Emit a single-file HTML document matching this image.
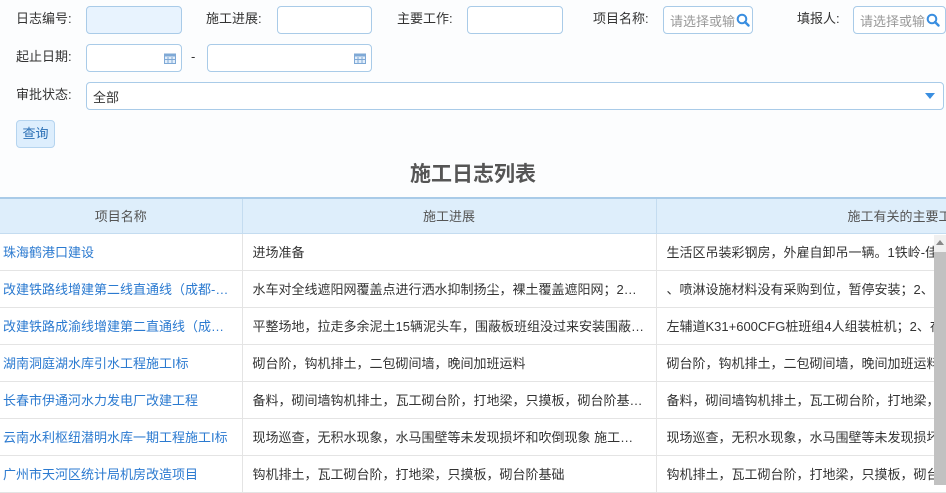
<!DOCTYPE html>
<html><head><meta charset="utf-8"><style>
*{margin:0;padding:0;box-sizing:border-box}
body{width:946px;height:485px;overflow:hidden;background:#fcfdfe;font-family:"Liberation Sans","Noto Sans CJK SC",sans-serif;font-size:13px;color:#333;position:relative}
.a{position:absolute}
.lbl{position:absolute;font-size:13px;color:#333;line-height:16px}
.inp{position:absolute;border:1px solid #a9cbe8;border-radius:4px;background:#fff;height:28px}
.ph{color:#999;font-size:13px;position:absolute;left:6px;top:4px;white-space:nowrap;overflow:hidden;width:66px}
table{position:absolute;left:0;top:197px;border-collapse:collapse;table-layout:fixed;width:1156px}
th{background:#deeefb;height:35px;font-weight:normal;color:#555;border-top:2px solid #a9cbe8;border-bottom:1px solid #c4dcf0;border-right:1px solid #c4dcf0;font-size:13px;padding:0}
td{height:37px;border-bottom:1px solid #e4e4e4;border-right:1px solid #e4e4e4;padding:0 10px;white-space:nowrap;overflow:hidden;text-overflow:ellipsis;background:#fff}
td.n{color:#2b7ad0;padding-left:3px}
</style></head><body>
<div class="lbl" style="left:16px;top:11px">日志编号:</div>
<div class="inp" style="left:86px;top:6px;width:96px;background:#e8f3fe"></div>
<div class="lbl" style="left:206px;top:11px">施工进展:</div>
<div class="inp" style="left:277px;top:6px;width:95px"></div>
<div class="lbl" style="left:397px;top:11px">主要工作:</div>
<div class="inp" style="left:467px;top:6px;width:96px"></div>
<div class="lbl" style="left:593px;top:11px">项目名称:</div>
<div class="inp" style="left:663px;top:6px;width:90px"><span class="ph">请选择或输</span>
<svg class="a" style="left:72px;top:6px" width="14" height="14" viewBox="0 0 14 14"><circle cx="6" cy="6" r="4.3" fill="none" stroke="#3a8ee0" stroke-width="2"/><path d="M9 9l3.5 3.5" stroke="#3a8ee0" stroke-width="2.4" stroke-linecap="round"/></svg></div>
<div class="lbl" style="left:797px;top:11px">填报人:</div>
<div class="inp" style="left:853px;top:6px;width:93px"><span class="ph">请选择或输</span>
<svg class="a" style="left:72px;top:6px" width="14" height="14" viewBox="0 0 14 14"><circle cx="6" cy="6" r="4.3" fill="none" stroke="#3a8ee0" stroke-width="2"/><path d="M9 9l3.5 3.5" stroke="#3a8ee0" stroke-width="2.4" stroke-linecap="round"/></svg></div>

<div class="lbl" style="left:16px;top:49px">起止日期:</div>
<div class="inp" style="left:86px;top:44px;width:96px">
<svg class="a" style="left:77px;top:7px" width="12" height="12" viewBox="0 0 12 12"><rect x="0.5" y="2" width="11" height="9.5" fill="#e3eefa" stroke="#7fa9d6"/><rect x="0.5" y="2" width="11" height="2.5" fill="#7fa9d6"/><path d="M4 5v6M8 5v6M1 7.5h10" stroke="#7fa9d6"/></svg></div>
<div class="lbl" style="left:191px;top:49px">-</div>
<div class="inp" style="left:207px;top:44px;width:165px">
<svg class="a" style="left:146px;top:7px" width="12" height="12" viewBox="0 0 12 12"><rect x="0.5" y="2" width="11" height="9.5" fill="#e3eefa" stroke="#7fa9d6"/><rect x="0.5" y="2" width="11" height="2.5" fill="#7fa9d6"/><path d="M4 5v6M8 5v6M1 7.5h10" stroke="#7fa9d6"/></svg></div>

<div class="lbl" style="left:16px;top:87px">审批状态:</div>
<div class="inp" style="left:86px;top:82px;width:858px"><span class="a" style="left:6px;top:4px;color:#333">全部</span>
<svg class="a" style="left:838px;top:10px" width="10" height="7"><path d="M0 0h10L5 6z" fill="#3a8ee0"/></svg></div>

<div class="a" style="left:16px;top:120px;width:39px;height:28px;background:#ddeefd;border:1px solid #b5d4ef;border-radius:4px;color:#2a6fb5;text-align:center;line-height:26px">查询</div>

<div class="a" style="left:0;top:158px;width:946px;text-align:center;font-size:21px;font-weight:bold;color:#555">施工日志列表</div>

<table>
<colgroup><col style="width:242px"><col style="width:414px"><col style="width:500px"></colgroup>
<tr><th>项目名称</th><th>施工进展</th><th>施工有关的主要工作</th></tr>
<tr><td class="n">珠海鹤港口建设</td><td>进场准备</td><td>生活区吊装彩钢房，外雇自卸吊一辆。1铁岭-佳</td></tr>
<tr><td class="n">改建铁路线增建第二线直通线（成都-西安）</td><td>水车对全线遮阳网覆盖点进行洒水抑制扬尘，裸土覆盖遮阳网；2、覆盖</td><td>、喷淋设施材料没有采购到位，暂停安装；2、</td></tr>
<tr><td class="n">改建铁路成渝线增建第二直通线（成都）</td><td>平整场地，拉走多余泥土15辆泥头车，围蔽板班组没过来安装围蔽板施工</td><td>左辅道K31+600CFG桩班组4人组装桩机；2、在</td></tr>
<tr><td class="n">湖南洞庭湖水库引水工程施工I标</td><td>砌台阶，钩机排土，二包砌间墙，晚间加班运料</td><td>砌台阶，钩机排土，二包砌间墙，晚间加班运料</td></tr>
<tr><td class="n">长春市伊通河水力发电厂改建工程</td><td>备料，砌间墙钩机排土，瓦工砌台阶，打地梁，只摸板，砌台阶基础施工</td><td>备料，砌间墙钩机排土，瓦工砌台阶，打地梁，</td></tr>
<tr><td class="n">云南水利枢纽潜明水库一期工程施工I标</td><td>现场巡查，无积水现象，水马围壁等未发现损坏和吹倒现象 施工机械</td><td>现场巡查，无积水现象，水马围壁等未发现损坏</td></tr>
<tr><td class="n">广州市天河区统计局机房改造项目</td><td>钩机排土，瓦工砌台阶，打地梁，只摸板，砌台阶基础</td><td>钩机排土，瓦工砌台阶，打地梁，只摸板，砌台</td></tr>
</table>
<div class="a" style="left:934px;top:235px;width:12px;height:250px;background:#f0f0f0"></div>
<div class="a" style="left:934px;top:252px;width:12px;height:233px;background:#c1c1c1"></div>
<svg class="a" style="left:936px;top:240px" width="8" height="6"><path d="M0 5h8L4 0z" fill="#888"/></svg>
</body></html>
